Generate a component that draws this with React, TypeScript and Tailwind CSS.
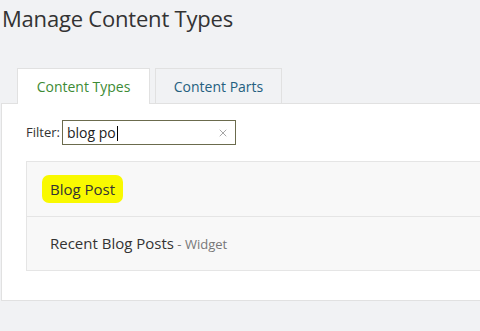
import { X } from 'lucide-react';

// Content type admin screen: title, tabs, filter box and result list
export default function App() {
  const rows = [
    { name: 'Blog Post', hint: '', marked: true },
    { name: 'Recent Blog Posts', hint: 'Widget', marked: false },
  ];

  return (
    <div className="h-[331px] w-[480px] overflow-hidden bg-[#f1f2f4] text-[#333] font-['Open_Sans',sans-serif]">
      {/* Page title */}
      <h1 className="pl-[2px] pt-[3px] text-[22px] leading-[30px] tracking-[-0.2px] text-[#333]">
        Manage Content Types
      </h1>

      {/* Tabs */}
      <div className="mt-[35px] flex gap-[5px] pl-[17px]">
        <div className="relative z-10 -mb-px flex h-[36px] w-[133px] items-center justify-center border border-b-0 border-[#e1e1e1] bg-white text-[14px] text-[#3d8b35]">
          Content Types
        </div>
        <div className="flex h-[35px] w-[127px] items-center justify-center border border-b-0 border-[#e1e1e1] bg-[#f1f2f4] text-[14px] text-[#24607f]">
          Content Parts
        </div>
      </div>

      {/* Panel */}
      <div className="ml-[1px] h-[198px] border border-r-0 border-[#e1e1e1] bg-white pl-[24px] pt-[16px]">
        <div className="flex items-center gap-[2px]">
          <span className="text-[13px] text-[#333]">Filter:</span>
          <div className="flex h-[25px] w-[174px] items-center justify-between border border-[#6b6b4d] pl-[4px] pr-[6px]">
            <span className="text-[14px] text-[#222]">
              blog po<span className="ml-px inline-block h-[15px] w-px translate-y-[3px] bg-black" />
            </span>
            <X className="h-[12px] w-[12px] text-[#888]" strokeWidth={1.5} />
          </div>
        </div>

        <div className="mt-[16px] border border-r-0 border-[#e5e5e5] bg-[#f8f8f8]">
          {rows.map((row, i) => (
            <div
              key={row.name}
              className={`flex h-[54px] items-center pl-[23px] ${i > 0 ? 'border-t border-[#e5e5e5]' : ''}`}
            >
              {row.marked ? (
                <span className="-ml-[8px] rounded-[7px] bg-[#f9f900] px-[8px] py-[3px] text-[15px] text-[#333]">
                  {row.name}
                </span>
              ) : (
                <span className="text-[15px] text-[#333]">
                  {row.name}
                  <span className="text-[13px] text-[#777]"> - {row.hint}</span>
                </span>
              )}
            </div>
          ))}
        </div>
      </div>
    </div>
  );
}
